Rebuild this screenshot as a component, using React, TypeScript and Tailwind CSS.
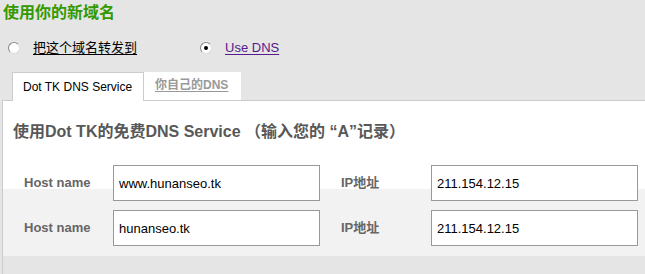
const FONT = "font-['Liberation_Sans','Noto_Sans_CJK_SC',Arial,sans-serif]"

function Radio({ checked }: { checked?: boolean }) {
  return (
    <span className="flex h-[12px] w-[12px] items-center justify-center rounded-full border border-t-[#888] border-l-[#888] border-r-[#ddd] border-b-[#ddd] bg-white">
      {checked && <span className="h-[4px] w-[4px] rounded-full bg-black" />}
    </span>
  )
}

const rows = [
  { host: 'www.hunanseo.tk', ip: '211.154.12.15' },
  { host: 'hunanseo.tk', ip: '211.154.12.15' },
]

export default function App() {
  return (
    <div className={`h-[274px] w-[645px] overflow-hidden bg-[#e5e5e5] ${FONT}`}>
      {/* page title */}
      <h1 className="pl-[3px] text-[16px] font-bold leading-[26px] text-[#339900]">使用你的新域名</h1>

      {/* forward / dns choice */}
      <div className="mt-[11px] flex h-[21px] items-center text-[13px] leading-[21px]">
        <span className="ml-[8px]"><Radio /></span>
        <span className="ml-[13px] text-black underline underline-offset-2">把这个域名转发到</span>
        <span className="ml-[63px]"><Radio checked /></span>
        <span className="ml-[13px] text-[#551a8b] underline underline-offset-2">Use DNS</span>
      </div>

      {/* tabs */}
      <div className="mt-[14px] flex pl-[12px]">
        <div className="relative z-10 -mb-px h-[29px] w-[132px] border border-b-0 border-[#ccc] bg-white pl-[10px] pt-[7px] text-[12px] leading-[15px] text-black">
          Dot TK DNS Service
        </div>
        <div className="h-[28px] w-[97px] bg-white pl-[11px] pt-[6px] text-[12px] font-bold leading-[15px] text-[#999] underline underline-offset-2">
          你自己的DNS
        </div>
      </div>

      {/* panel */}
      <div className="ml-[2px] border-l border-t border-[#ccc]">
        <div className="bg-white pt-[21px]">
          <h2 className="pl-[10px] text-[16px] font-bold leading-[20px] text-[#585858]">
            使用Dot TK的免费DNS Service （输入您的 “A”记录）
          </h2>
          <div className="mt-[23px] flex flex-col gap-[9px] bg-[linear-gradient(to_bottom,#ffffff_24px,#f2f2f2_24px)] pb-[10px]">
            {rows.map((r) => (
              <div key={r.host} className="flex h-[36px] items-center">
                <span className="w-[110px] pl-[21px] text-[13px] font-bold text-[#666]">Host name</span>
                <input
                  readOnly
                  value={r.host}
                  className="relative h-[36px] w-[207px] border border-[#999] bg-white pl-[5px] pt-[1px] text-[13px] text-black outline-none"
                />
                <span className="w-[111px] pl-[21px] text-[13px] font-bold text-[#666]">IP地址</span>
                <input
                  readOnly
                  value={r.ip}
                  className="relative h-[36px] w-[207px] border border-[#999] bg-white pl-[5px] pt-[1px] text-[13px] text-black outline-none"
                />
              </div>
            ))}
          </div>
        </div>
        <div className="h-[20px]" />
      </div>
    </div>
  )
}
